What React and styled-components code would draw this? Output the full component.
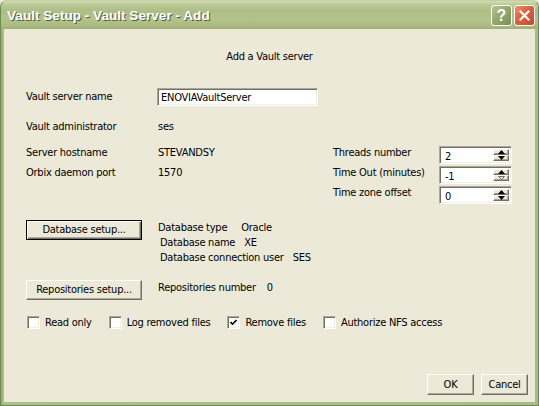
import React from "react";
import styled, { createGlobalStyle, css } from "styled-components";

const GlobalStyle = createGlobalStyle`
  html, body { margin: 0; padding: 0; background: #ECE9D8; }
  body {
    font-family: "DejaVu Sans Condensed", "Liberation Sans", Arial, sans-serif;
    font-size: 11px;
    letter-spacing: -0.25px;
    color: #000;
  }
  * { box-sizing: border-box; }
`;

const Window = styled.div`
  width: 539px;
  height: 406px;
  display: flex;
  flex-direction: column;
  background: linear-gradient(to right, #8FA56C 0px, #AEBF8E 2px, #A9BA88 100%);
  border: 1px solid #6E8C4E;
  border-top-color: #C3CFA2;
  border-radius: 7px 7px 0 0;
  overflow: hidden;
`;

const TitleBar = styled.div`
  height: 28px;
  flex: none;
  display: flex;
  align-items: center;
  justify-content: space-between;
  padding: 0 3px 0 6px;
  background: linear-gradient(
    to bottom,
    #D4DEB4 0%,
    #BCCA98 12%,
    #AEBD86 35%,
    #B4C28D 65%,
    #AABA82 90%,
    #9FB077 100%
  );
`;

const Title = styled.span`
  font-family: "Liberation Sans", Arial, sans-serif;
  font-weight: bold;
  font-size: 13.6px;
  letter-spacing: 0;
  color: #fff;
  text-shadow: 1px 1px 0 #4E5E34;
`;

const Caps = styled.div`
  display: flex;
  gap: 2px;
  margin-top: 1px;
`;

const CapButton = styled.div`
  width: 21px;
  height: 21px;
  border: 1px solid #fff;
  border-radius: 3px;
  display: flex;
  align-items: center;
  justify-content: center;
  color: #fff;
  font-family: "Liberation Sans", Arial, sans-serif;
  font-weight: bold;
  font-size: 16px;
  letter-spacing: 0;
  ${(p) =>
    p.$kind === "close"
      ? css`
          background: linear-gradient(135deg, #EE9070 0%, #DC6542 40%, #C8472A 100%);
        `
      : css`
          background: linear-gradient(135deg, #B5C595 0%, #94A96F 45%, #7A8F55 100%);
        `}
`;

const Body = styled.div`
  flex: 1;
  margin: 0 3px 3px;
  background: #ECE9D8;
  display: flex;
  flex-direction: column;
  padding: 21px 0 7px 22px;
`;

const Heading = styled.div`
  line-height: 14px;
  text-align: center;
  margin-left: -22px;
`;

const Row = styled.div`
  display: flex;
  align-items: ${(p) => (p.$center ? "center" : "flex-start")};
  margin-top: ${(p) => p.$mt || 0}px;
  min-height: ${(p) => p.$h || 14}px;
`;

const Label = styled.span`
  width: ${(p) => p.$w || 132}px;
  flex: none;
  line-height: 14px;
  white-space: nowrap;
`;

const Value = styled.span`
  line-height: 14px;
  white-space: nowrap;
`;

const sunken = css`
  border: 1px solid;
  border-color: #ACA899 #fff #fff #ACA899;
  box-shadow: inset 1px 1px 0 #716F64, inset -1px -1px 0 #F1EFE2;
  background: #fff;
`;

const TextInput = styled.div`
  ${sunken};
  width: 161px;
  height: 18px;
  margin-left: -1px;
  padding: 2px 3px 0;
  line-height: 14px;
`;

const ServerSection = styled.div`
  display: flex;
  margin-top: 12px;
`;

const InfoColumn = styled.div`
  width: 307px;
  flex: none;
  display: grid;
  grid-auto-rows: 20px;
`;

const SpinColumn = styled.div`
  display: grid;
  grid-auto-rows: 20px;
`;

const SpinRow = styled.div`
  display: flex;
  align-items: flex-start;
`;

const SpinBox = styled.div`
  ${sunken};
  width: 73px;
  height: 18px;
  display: flex;
  padding: 2px;
`;

const SpinText = styled.span`
  flex: 1;
  padding: 1px 0 0 3px;
  line-height: 13px;
`;

const SpinButtons = styled.div`
  width: 16px;
  display: flex;
  flex-direction: column;
`;

const raised = css`
  background: #ECE9D8;
  border: 1px solid;
  border-color: #fff #716F64 #716F64 #fff;
  box-shadow: inset -1px -1px 0 #ACA899;
`;

const SpinHalf = styled.div`
  ${raised};
  flex: 1;
  display: flex;
  align-items: center;
  justify-content: center;
`;

const SetupRow = styled.div`
  display: flex;
  align-items: flex-start;
  margin-top: ${(p) => p.$mt}px;
`;

const PushButton = styled.div`
  ${raised};
  height: ${(p) => p.$h || 20}px;
  width: ${(p) => p.$w || 116}px;
  flex: none;
  display: flex;
  align-items: center;
  justify-content: center;
  line-height: 14px;
  white-space: nowrap;
  ${(p) =>
    p.$default &&
    css`
      border-color: #000;
      box-shadow: inset 1px 1px 0 #fff, inset -1px -1px 0 #716F64, inset -2px -2px 0 #ACA899;
    `}
`;

const Details = styled.div`
  margin-left: 16px;
  display: flex;
  flex-direction: column;
`;

const DetailLine = styled.div`
  display: flex;
  gap: ${(p) => p.$gap || 9}px;
  line-height: 15px;
  padding-left: ${(p) => p.$indent || 0}px;
  white-space: nowrap;
`;

const Checks = styled.div`
  display: flex;
  gap: 17px;
  margin-top: 16px;
  margin-left: 1px;
`;

const CheckItem = styled.label`
  display: flex;
  align-items: center;
  gap: 5px;
  line-height: 13px;
  white-space: nowrap;
`;

const Box = styled.span`
  ${sunken};
  width: 13px;
  height: 13px;
  display: flex;
  align-items: center;
  justify-content: center;
`;

const Footer = styled.div`
  margin-top: auto;
  display: flex;
  justify-content: flex-end;
  gap: 7px;
  padding-right: 7px;
`;

const Arrow = ({ up, disabled }) => (
  <svg width="7" height="4" viewBox="0 0 7 4">
    {disabled ? (
      <polygon
        points={up ? "3.5,0 7,4 0,4" : "0.5,0.5 6.5,0.5 3.5,3.5"}
        fill="none"
        stroke="#716F64"
        strokeWidth="1"
      />
    ) : (
      <polygon points={up ? "3.5,0 7,4 0,4" : "0,0 7,0 3.5,4"} fill="#000" />
    )}
  </svg>
);

const Spin = ({ value, downDisabled }) => (
  <SpinBox>
    <SpinText>{value}</SpinText>
    <SpinButtons>
      <SpinHalf>
        <Arrow up />
      </SpinHalf>
      <SpinHalf>
        <Arrow disabled={downDisabled} />
      </SpinHalf>
    </SpinButtons>
  </SpinBox>
);

const Check = ({ checked, children }) => (
  <CheckItem>
    <Box>
      {checked && (
        <svg width="7" height="7" viewBox="0 0 7 7">
          <path d="M0.5 3 L2.5 5.2 L6.5 1" fill="none" stroke="#000" strokeWidth="1.6" />
        </svg>
      )}
    </Box>
    {children}
  </CheckItem>
);

export default function App() {
  return (
    <>
      <GlobalStyle />
      <Window>
        <TitleBar>
          <Title>Vault Setup - Vault Server - Add</Title>
          <Caps>
            <CapButton $kind="help">?</CapButton>
            <CapButton $kind="close">
              <svg width="11" height="11" viewBox="0 0 11 11">
                <path d="M1.5 1.5 L9.5 9.5 M9.5 1.5 L1.5 9.5" stroke="#fff" strokeWidth="2.2" strokeLinecap="square" />
              </svg>
            </CapButton>
          </Caps>
        </TitleBar>
        <Body>
          <Heading>Add a Vault server</Heading>

          <Row $mt={24} $h={18} $center>
            <Label>Vault server name</Label>
            <TextInput>ENOVIAVaultServer</TextInput>
          </Row>

          <Row $mt={14}>
            <Label>Vault administrator</Label>
            <Value>ses</Value>
          </Row>

          <ServerSection>
            <InfoColumn>
              <Row>
                <Label>Server hostname</Label>
                <Value>STEVANDSY</Value>
              </Row>
              <Row>
                <Label>Orbix daemon port</Label>
                <Value>1570</Value>
              </Row>
            </InfoColumn>
            <SpinColumn>
              <SpinRow>
                <Label $w={106}>Threads number</Label>
                <Spin value="2" />
              </SpinRow>
              <SpinRow>
                <Label $w={106}>Time Out (minutes)</Label>
                <Spin value="-1" downDisabled />
              </SpinRow>
              <SpinRow>
                <Label $w={106}>Time zone offset</Label>
                <Spin value="0" />
              </SpinRow>
            </SpinColumn>
          </ServerSection>

          <SetupRow $mt={14}>
            <PushButton $default>Database setup...</PushButton>
            <Details>
              <DetailLine $gap={14}>
                <span>Database type</span>
                <span>Oracle</span>
              </DetailLine>
              <DetailLine $indent={2}>
                <span>Database name</span>
                <span>XE</span>
              </DetailLine>
              <DetailLine $indent={2}>
                <span>Database connection user</span>
                <span>SES</span>
              </DetailLine>
            </Details>
          </SetupRow>

          <SetupRow $mt={15}>
            <PushButton>Repositories setup...</PushButton>
            <Details>
              <DetailLine $gap={11}>
                <span>Repositories number</span>
                <span>0</span>
              </DetailLine>
            </Details>
          </SetupRow>

          <Checks>
            <Check>Read only</Check>
            <Check>Log removed files</Check>
            <Check checked>Remove files</Check>
            <Check>Authorize NFS access</Check>
          </Checks>

          <Footer>
            <PushButton $w={47} $h={21}>OK</PushButton>
            <PushButton $w={47} $h={21}>Cancel</PushButton>
          </Footer>
        </Body>
      </Window>
    </>
  );
}
